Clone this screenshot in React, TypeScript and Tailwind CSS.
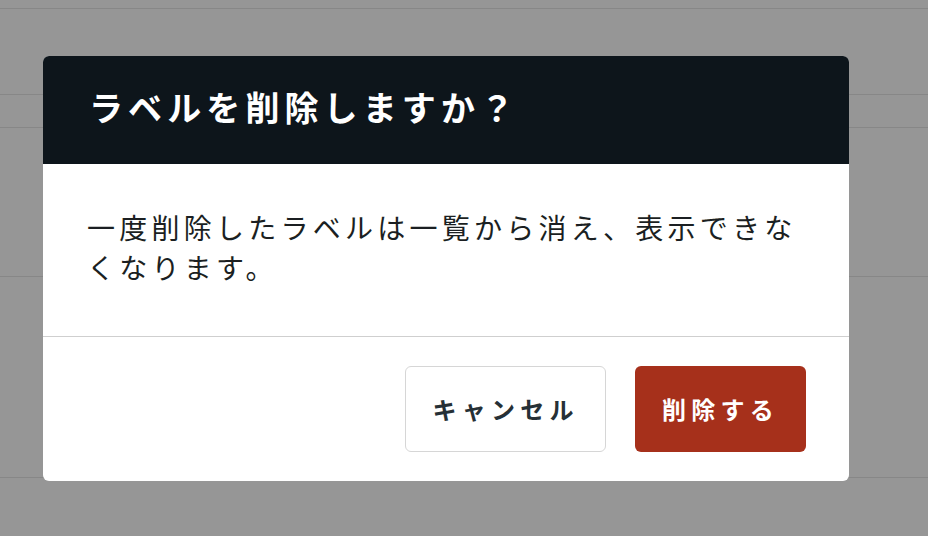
export default function App() {
    const rows = ["h-[9px]", "h-[86px]", "h-[33px]", "h-[149px]", "h-[201px]"];
    return (
        <div
            className="relative w-[928px] h-[536px] overflow-hidden bg-[#969696]"
            style={{fontFamily: '"Noto Sans CJK JP", "Noto Sans", sans-serif'}}
        >
            {/* page underneath the overlay */}
            <div className="flex flex-col">
                {rows.map((h, i) => (
                    <div key={i} className={`${h} border-b border-[#878787]`}/>
                ))}
            </div>

            <div className="absolute inset-0 flex items-center pl-[43px]">
                <div className="w-[806px] bg-white rounded-[6px] overflow-hidden">
                    <div className="h-[108px] flex items-center px-[46px] pb-[5px] bg-[#0d151b]">
                        <h2 className="text-[34px] font-bold tracking-[0.15em] text-white leading-none">
                            ラベルを削除しますか？
                        </h2>
                    </div>
                    <div className="px-[44px] pt-[43px] pb-[49px]">
                        <p className="text-[28px] leading-[40px] tracking-[4.25px] text-[#1b1f22]">
                            一度削除したラベルは一覧から消え、表示できなくなります。
                        </p>
                    </div>
                    <div className="flex justify-end gap-[29px] px-[43px] py-[29px] border-t border-[#cfcfcf]">
                        <button className="h-[86px] px-[26px] rounded-[6px] border border-[#d6d6d6] bg-white text-[24px] font-bold tracking-[0.22em] text-[#263036]">
                            キャンセル
                        </button>
                        <button className="h-[86px] px-[27px] rounded-[6px] bg-[#a6301b] text-[24px] font-bold tracking-[0.22em] text-white">
                            削除する
                        </button>
                    </div>
                </div>
            </div>
        </div>
    );
}
